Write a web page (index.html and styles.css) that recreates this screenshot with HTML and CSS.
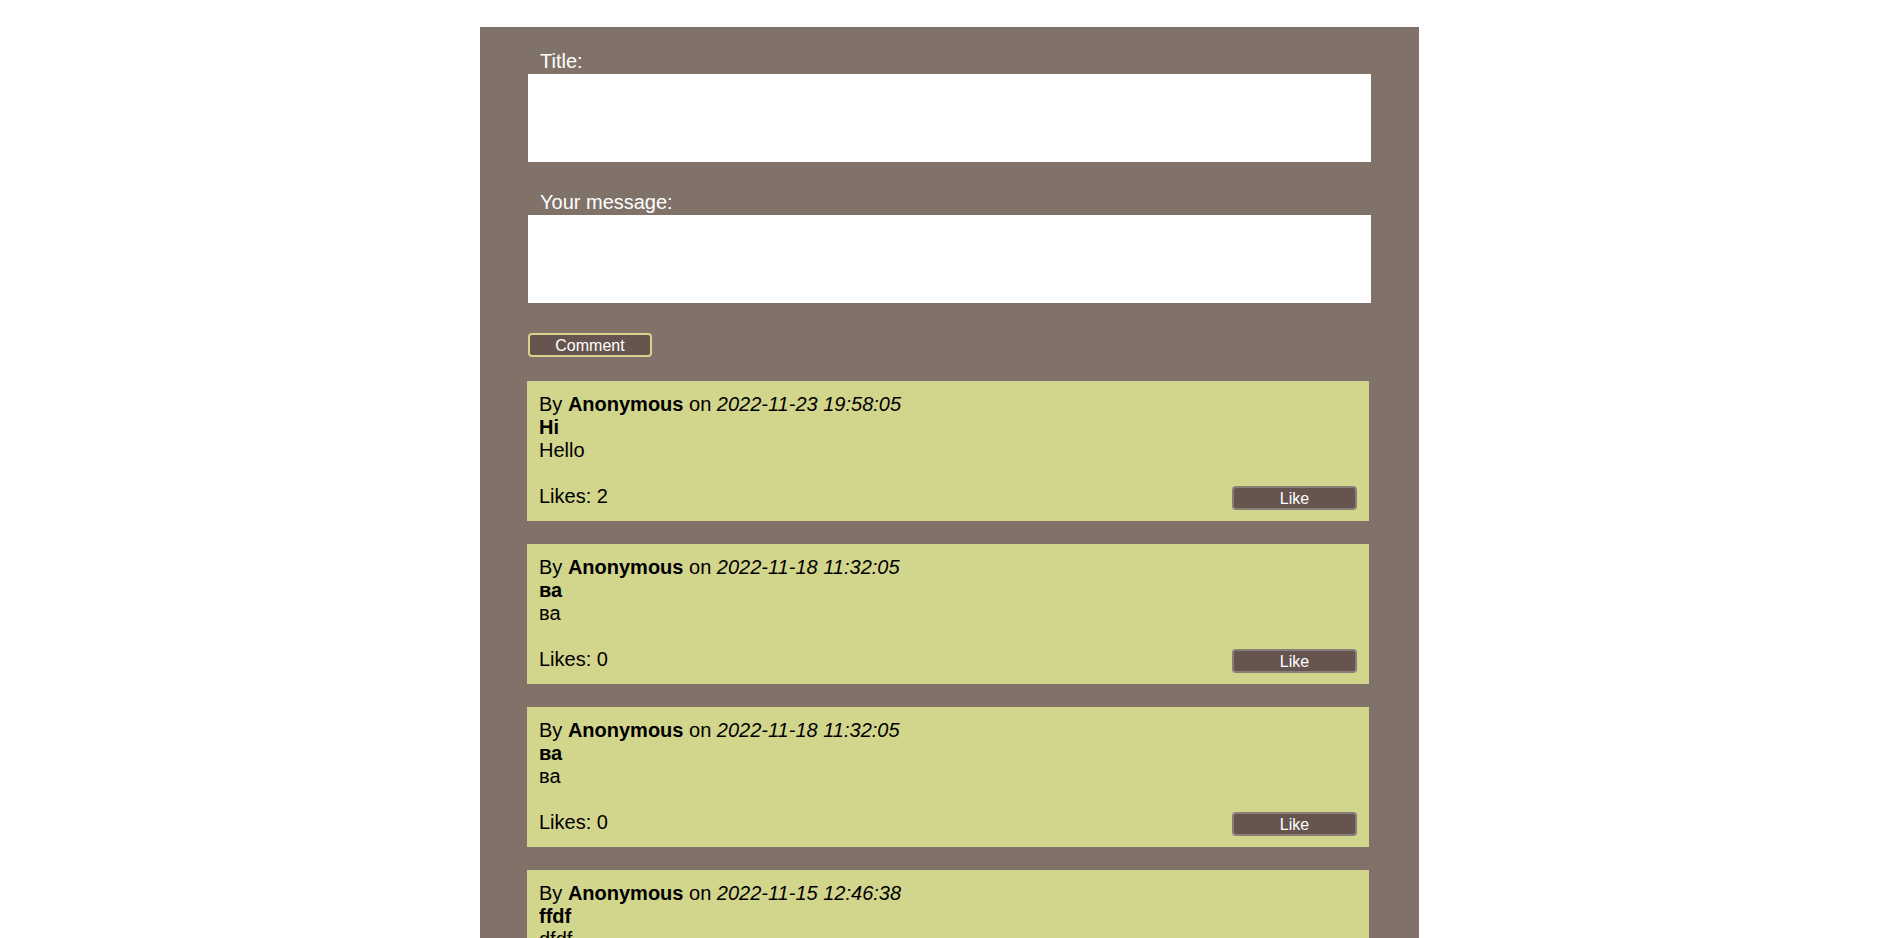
FILE: index.html
```html
<!DOCTYPE html>
<html>
<head>
<meta charset="utf-8">
<link rel="stylesheet" href="styles.css">
</head>
<body>
<div class="wall">
  <form class="post-form">
    <div class="field">
      <label class="field-label">Title:</label>
      <input class="field-input" type="text">
    </div>
    <div class="field field-msg">
      <label class="field-label">Your message:</label>
      <textarea class="field-input"></textarea>
    </div>
    <button type="button" class="btn btn-comment">Comment</button>
  </form>
  <div class="comments">
    <div class="card">
      <div>By <b>Anonymous</b> on <i>2022-11-23 19:58:05</i></div>
      <div class="title">Hi</div>
      <div>Hello</div>
      <div class="blank"></div>
      <div class="card-foot"><span>Likes: 2</span><button type="button" class="btn btn-like">Like</button></div>
    </div>
    <div class="card">
      <div>By <b>Anonymous</b> on <i>2022-11-18 11:32:05</i></div>
      <div class="title">ва</div>
      <div>ва</div>
      <div class="blank"></div>
      <div class="card-foot"><span>Likes: 0</span><button type="button" class="btn btn-like">Like</button></div>
    </div>
    <div class="card">
      <div>By <b>Anonymous</b> on <i>2022-11-18 11:32:05</i></div>
      <div class="title">ва</div>
      <div>ва</div>
      <div class="blank"></div>
      <div class="card-foot"><span>Likes: 0</span><button type="button" class="btn btn-like">Like</button></div>
    </div>
    <div class="card">
      <div>By <b>Anonymous</b> on <i>2022-11-15 12:46:38</i></div>
      <div class="title">ffdf</div>
      <div>dfdf</div>
      <div class="blank"></div>
      <div class="card-foot"><span>Likes: 0</span><button type="button" class="btn btn-like">Like</button></div>
    </div>
  </div>
</div>
</body>
</html>
```
FILE: styles.css
```css
html, body {
  margin: 0;
  background: #ffffff;
}
body {
  padding: 27px 0 0 5px;
  font-family: "Liberation Sans", Arial, sans-serif;
}
.wall {
  width: 939px;
  box-sizing: border-box;
  margin: 0 auto;
  background: #807269;
  padding: 23px 48px 40px 48px;
}
.post-form {
  display: flex;
  flex-direction: column;
  align-items: flex-start;
}
.field {
  display: flex;
  flex-direction: column;
  width: 843px;
  margin-bottom: 29px;
}
.field-msg {
  margin-bottom: 30px;
}
.field-label {
  color: #ffffff;
  font-size: 20px;
  line-height: 23px;
  padding-left: 12px;
  margin-bottom: 1px;
}
.field-input {
  display: block;
  width: 843px;
  height: 88px;
  box-sizing: border-box;
  border: none;
  margin: 0;
  background: #ffffff;
  resize: none;
  font-family: "Liberation Sans", Arial, sans-serif;
}
.btn {
  font-family: "Liberation Sans", Arial, sans-serif;
  font-size: 16px;
  color: #ffffff;
  background: #66544f;
  width: 124px;
  height: 24px;
  box-sizing: border-box;
  border-radius: 4px;
  padding: 0;
  line-height: 18px;
}
.btn-comment {
  border: 2px solid #d5d48e;
  padding-top: 1px;
}
.btn-like {
  border: 2px solid #8a7e79;
  width: 125px;
  margin-top: 1px;
  padding-top: 1px;
}
.comments {
  display: flex;
  flex-direction: column;
  gap: 23px;
  margin-top: 24px;
  margin-left: -1px;
}
.card {
  width: 842px;
  box-sizing: border-box;
  background: #d2d58c;
  padding: 12px 12px 11px 12px;
  color: #000000;
  font-size: 20px;
  line-height: 23px;
}
.title {
  font-weight: bold;
}
.blank {
  height: 23px;
}
.card-foot {
  display: flex;
  justify-content: space-between;
  align-items: flex-start;
}
```
